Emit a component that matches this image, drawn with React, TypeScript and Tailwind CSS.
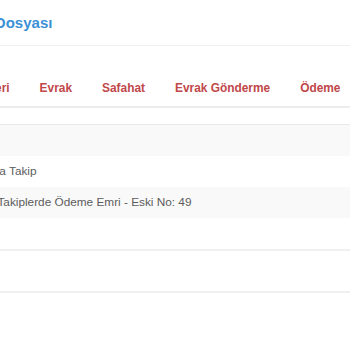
import React from 'react';

const tabs = ['Bilgileri', 'Evrak', 'Safahat', 'Evrak Gönderme', 'Ödeme', 'Notlar'];

const rows = [
  { id: 1, text: 'Genel Haciz Yoluyla Takip', offset: '-ml-[99px]' },
  { id: 2, text: 'İlamsız Takiplerde Ödeme Emri - Eski No: 49', offset: '-ml-[43px]' },
];

export default function App() {
  return (
    <div className="w-[350px] h-[350px] overflow-hidden bg-white font-['Liberation_Sans',Arial,sans-serif]">
      <div className="h-[46px] pt-[2px] flex items-center border-b border-[#f0f0f0] whitespace-nowrap">
        <h1 className="-ml-[36px] text-[15px] font-bold text-[#3a8fd6]">İcra Dosyası</h1>
      </div>

      <nav className="pt-[26px] border-b-2 border-[#ededed]">
        <ul className="-ml-[49px] flex whitespace-nowrap">
          {tabs.map((tab) => (
            <li key={tab} className="h-[34px] px-[15px] flex items-center text-[11.9px] font-bold text-[#c0474a]">
              {tab}
            </li>
          ))}
        </ul>
      </nav>

      <div className="mt-[16px] border-t border-[#e9e9e9]">
        <div className="h-[31px] bg-[#f9f9f9]" />
        {rows.map((row, i) => (
          <div
            key={row.id}
            className={`h-[31px] flex items-center whitespace-nowrap text-[11.8px] text-[#5c5c5c] ${i % 2 ? 'bg-[#f9f9f9]' : 'bg-white'}`}
          >
            <span className={row.offset}>{row.text}</span>
          </div>
        ))}
      </div>

      <div className="mt-[31px] h-[42px] border-t-2 border-[#f0f0f0]" />
      <div className="border-t-2 border-[#f0f0f0]" />
    </div>
  );
}
